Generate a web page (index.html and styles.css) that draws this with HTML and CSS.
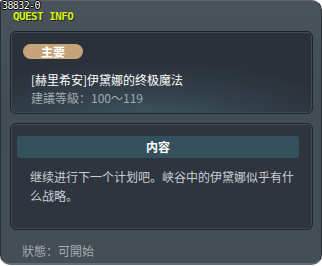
FILE: index.html
```html
<!DOCTYPE html>
<html lang="zh">
  <head>
    <meta charset="UTF-8" />
    <title>Quest Info</title>
    <link rel="stylesheet" href="styles.css">
  </head>
  <body>
    <div class="window">
      <span class="quest-id">38832-0</span>
      <div class="window-title">QUEST INFO</div>

      <div class="panel summary">
        <span class="badge">主要</span>
        <div class="quest-name">[赫里希安]伊黛娜的终极魔法</div>
        <div class="quest-level">建議等級：100～119</div>
      </div>

      <div class="panel content">
        <div class="content-head">内容</div>
        <p class="content-text">继续进行下一个计划吧。峡谷中的伊黛娜似乎有什么战略。</p>
      </div>

      <div class="status">狀態：可開始</div>
    </div>
  </body>
</html>
```

FILE: styles.css
```css
* {
  box-sizing: border-box;
}

body {
  margin: 0;
  padding: 0;
  background: #ffffff;
  font-family: "Noto Sans CJK SC", "DejaVu Sans", sans-serif;
  font-size: 12px;
}

.window {
  position: relative;
  width: 322px;
  height: 265px;
  padding: 0 8px 0 9px;
  background: linear-gradient(#4a525a, #434b53 40%, #454d55);
  border: 1px solid #2a3036;
  border-top-color: #5a636c;
  border-bottom: 2px solid #5f6c77;
  border-radius: 3px 10px 10px 10px;
}

.quest-id {
  position: absolute;
  top: -1px;
  left: 1px;
  font-family: "DejaVu Sans Mono", monospace;
  font-size: 10px;
  letter-spacing: -0.6px;
  line-height: 11px;
  color: #ffffff;
  text-shadow: 1px 0 0 #000, -1px 0 0 #000, 0 1px 0 #000, 0 -1px 0 #000;
}

.window-title {
  height: 30px;
  padding: 9px 0 0 3px;
  font-family: "DejaVu Sans Mono", monospace;
  font-weight: bold;
  font-size: 11px;
  letter-spacing: -0.6px;
  line-height: 13px;
  color: #d6ee1c;
  text-shadow: 1px 1px 0 #1f2a12;
}

.panel {
  border: 1px solid #1f252b;
  border-radius: 6px;
  box-shadow: inset 0 0 0 1px #414b55;
}

.summary {
  height: 83px;
  padding: 11px 12px 0;
  background: radial-gradient(ellipse 70% 80% at 45% 115%, #3e5d68, #323f49 55%, #2b313a 100%);
}

.badge {
  display: inline-block;
  width: 60px;
  height: 15px;
  border-radius: 8px;
  background: #c5a47a;
  color: #ffffff;
  font-weight: bold;
  font-size: 12px;
  line-height: 15px;
  text-align: center;
}

.quest-name {
  margin-top: 11px;
  padding-left: 8px;
  color: #ffffff;
  line-height: 18px;
}

.quest-level {
  padding-left: 8px;
  color: #a1a9b0;
  line-height: 18px;
}

.content {
  height: 107px;
  margin-top: 9px;
  padding: 12px 13px 0 6px;
  background: #2f353e;
}

.content-head {
  height: 22px;
  border-radius: 3px;
  background: #34505c;
  color: #ffffff;
  font-weight: bold;
  line-height: 22px;
  text-align: center;
}

.content-text {
  margin: 9px 0 0 13px;
  color: #c9ced3;
  line-height: 19px;
}

.status {
  margin-top: 12px;
  padding-left: 12px;
  color: #a4abb1;
  line-height: 18px;
}
```
